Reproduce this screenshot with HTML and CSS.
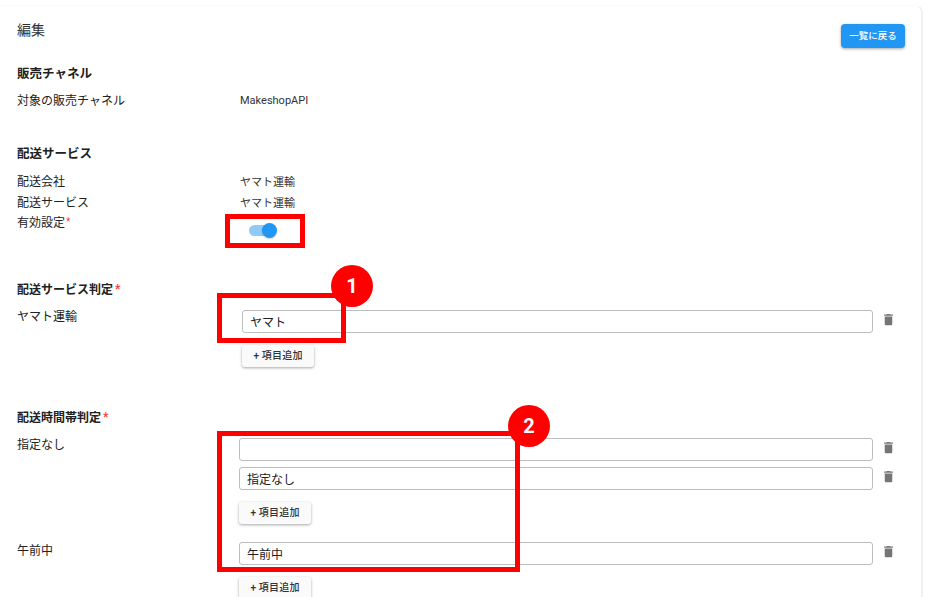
FILE: index.html
```html
<!DOCTYPE html>
<html lang="ja">
<head>
<meta charset="utf-8">
<title>編集</title>
<link rel="stylesheet" href="styles.css">
</head>
<body>
<main class="card">
  <header class="top">
    <h1 class="title">編集</h1>
    <button class="back" type="button">一覧に戻る</button>
  </header>

  <section class="sec sec-channel">
    <h2 class="head big">販売チャネル</h2>
    <div class="row"><span class="lab">対象の販売チャネル</span><span class="val">MakeshopAPI</span></div>
  </section>

  <section class="sec sec-service">
    <h2 class="head big">配送サービス</h2>
    <div class="row"><span class="lab">配送会社</span><span class="val val-ja">ヤマト運輸</span></div>
    <div class="row"><span class="lab">配送サービス</span><span class="val val-ja">ヤマト運輸</span></div>
    <div class="row row-switch"><span class="lab">有効設定<i class="req">*</i></span>
      <span class="switch"><span class="track"></span><span class="thumb"></span></span></div>
  </section>

  <section class="sec sec-judge">
    <h2 class="head">配送サービス判定<i class="req">*</i></h2>
    <div class="group">
      <span class="lab glab">ヤマト運輸</span>
      <div class="fields inset">
        <div class="field"><input class="inp" type="text" value="ヤマト"><svg class="trash" viewBox="0 0 24 24"><use href="#trash"/></svg></div>
        <button class="add" type="button">+ 項目追加</button>
      </div>
    </div>
  </section>

  <section class="sec sec-time">
    <h2 class="head">配送時間帯判定<i class="req">*</i></h2>
    <div class="group">
      <span class="lab glab">指定なし</span>
      <div class="fields">
        <div class="field"><input class="inp" type="text" value=""><svg class="trash" viewBox="0 0 24 24"><use href="#trash"/></svg></div>
        <div class="field"><input class="inp" type="text" value="指定なし"><svg class="trash" viewBox="0 0 24 24"><use href="#trash"/></svg></div>
        <button class="add" type="button">+ 項目追加</button>
      </div>
    </div>
    <div class="group group-next">
      <span class="lab glab">午前中</span>
      <div class="fields">
        <div class="field"><input class="inp" type="text" value="午前中"><svg class="trash" viewBox="0 0 24 24"><use href="#trash"/></svg></div>
        <button class="add" type="button">+ 項目追加</button>
      </div>
    </div>
  </section>
</main>

<div class="mark m-switch"></div>
<div class="mark m-one"></div>
<div class="mark m-two"></div>
<div class="badge b-one">1</div>
<div class="badge b-two">2</div>

<svg class="defs" width="0" height="0"><symbol id="trash" viewBox="0 0 24 24"><path d="M6 19c0 1.1.9 2 2 2h8c1.1 0 2-.9 2-2V7H6v12zM19 4h-3.500l-1-1h-5l-1 1H5v2h14V4z"/></symbol></svg>
</body>
</html>
```

FILE: styles.css
```css
* { box-sizing: border-box; }
html, body { margin: 0; height: 597px; overflow: hidden; }
body {
  position: relative;
  background: #fff;
  font-family: Roboto, "Noto Sans CJK JP", sans-serif;
  font-size: 12px;
  color: #212121;
}
.card {
  width: 923px;
  height: 620px;
  margin-top: 5px;
  padding: 16px 16px 0 17px;
  background: #fff;
  border-radius: 4px 8px 0 0;
  border-top: 1px solid #fafafa;
  border-right: 2px solid #f0f0f0;
}
.top { display: flex; justify-content: space-between; align-items: flex-start; height: 27px; }
.title { margin: 0; font-size: 14px; font-weight: 400; line-height: 16px; color: #333; }
.back {
  margin-top: 2px;
  width: 64px;
  height: 24px;
  padding: 0;
  border: 0;
  border-radius: 4px;
  background: #2196f3;
  color: #fff;
  font: 500 9.5px/24px Roboto, "Noto Sans CJK JP", sans-serif;
  box-shadow: 0 1px 3px rgba(0,0,0,.35);
}
.head { margin: 0; font-size: 12px; font-weight: 700; line-height: 16px; color: #212121; }
.head.big { font-size: 12.5px; }
.req { color: #f44336; font-style: normal; font-weight: 700; margin-left: 2px; font-size: 12px; line-height: 10px; vertical-align: 1px; }
.lab .req { margin-left: 1px; font-size: 10px; font-weight: 400; vertical-align: 2px; }
.row { display: flex; height: 21px; align-items: center; }
.lab { display: block; width: 223px; line-height: 16px; }
.val { font-size: 11px; color: #333; }
.val-ja { margin-bottom: 2px; }
.sec-channel { margin-top: 17px; }
.sec-channel .row { margin-top: 8px; }
.sec-service { margin-top: 35px; }
.sec-service .head + .row { margin-top: 9px; }
.row-switch { align-items: flex-start; height: 27px; padding-top: 2px; }
.switch { position: relative; display: block; width: 28px; height: 16px; margin-left: 9px; margin-top: 8px; }
.track { position: absolute; left: 0; top: 2px; width: 26px; height: 11px; border-radius: 6px; background: #90caf9; }
.thumb { position: absolute; left: 13px; top: 0; width: 15px; height: 15px; border-radius: 50%; background: #2196f3; box-shadow: 0 1px 2px rgba(0,0,0,.2); }
.sec-judge { margin-top: 42px; }
.sec-time { margin-top: 43px; }
.group { display: flex; margin-top: 12px; }
.glab { margin-top: -1px; width: 222px; flex: none; }
.fields { display: flex; flex-direction: column; align-items: flex-start; width: 657px; }
.fields.inset { margin-left: 3px; width: 654px; }
.field { display: flex; align-items: center; width: 100%; margin-bottom: 6px; }
.inp {
  flex: 1;
  min-width: 0;
  height: 23px;
  padding: 0 7px;
  border: 1px solid #bdbdbd;
  border-radius: 3px;
  background: #fff;
  font: 12px Roboto, "Noto Sans CJK JP", sans-serif;
  color: #212121;
  outline: none;
}
.trash { flex: none; width: 15px; height: 15px; margin-left: 8px; margin-top: -4px; fill: #757575; }
.add {
  margin-top: 6px;
  width: 72px;
  height: 22px;
  padding: 0;
  border: 0;
  border-radius: 3px;
  background: #fafafa;
  color: #333;
  font: 500 10px/22px Roboto, "Noto Sans CJK JP", sans-serif;
  letter-spacing: .2px;
  box-shadow: 0 1px 3px rgba(0,0,0,.35);
}
.group-next { margin-top: 18px; }
.group-next .glab { margin-top: 1px; }
.mark { position: absolute; border: 5px solid #f00; }
.m-switch { left: 225px; top: 214px; width: 80px; height: 34px; }
.m-one { left: 217px; top: 293px; width: 129px; height: 50px; }
.m-two { left: 217px; top: 431px; width: 303px; height: 141px; }
.badge {
  position: absolute;
  width: 42px;
  height: 42px;
  border-radius: 50%;
  background: #f00;
  color: #fff;
  font: 700 20px/42px Roboto, sans-serif;
  text-align: center;
}
.b-one { left: 331px; top: 265px; }
.b-two { left: 508px; top: 405px; }
.defs { position: absolute; }
```
